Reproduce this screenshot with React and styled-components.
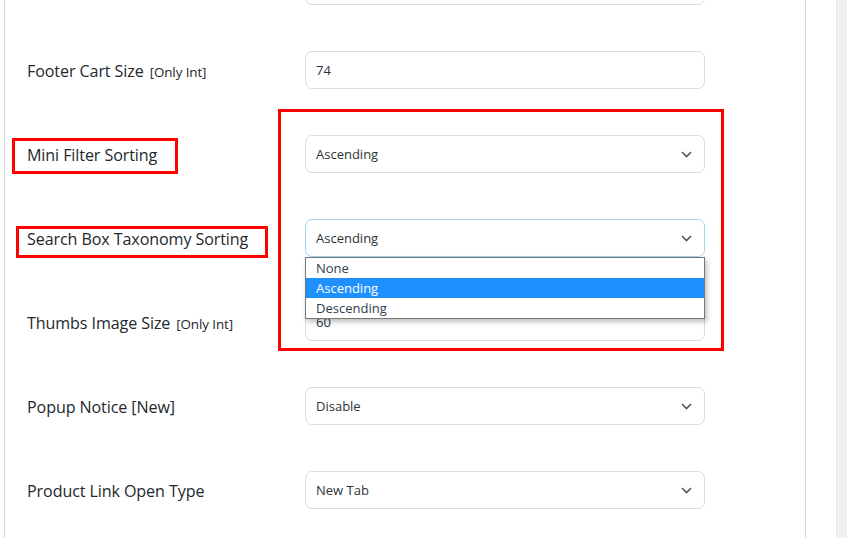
import React from "react";
import styled, { createGlobalStyle } from "styled-components";

const Global = createGlobalStyle`
  html, body { margin: 0; padding: 0; background: #fff; }
  body { font-family: "Open Sans", "Noto Sans", sans-serif; overflow: hidden; }
`;

const Page = styled.div`
  display: flex;
  width: 847px;
  height: 538px;
  overflow: hidden;
  background: #fff;
`;

const Panel = styled.div`
  position: relative;
  margin-left: 4px;
  width: 803px;
  height: 538px;
  box-sizing: border-box;
  border-left: 1px solid #d6d6d6;
  border-right: 1px solid #d6d6d6;
  overflow: hidden;
`;

const Gutter = styled.div`
  width: 30px;
`;

const Track = styled.div`
  width: 10px;
  background: #f0f0f0;
  border-left: 1px solid #e6e6e6;
`;

const Form = styled.div`
  display: flex;
  flex-direction: column;
  margin-top: -56px;
`;

const Row = styled.div`
  position: relative;
  display: grid;
  grid-template-columns: 278px 400px;
  align-items: center;
  padding: 23px 0 23px 22px;
`;

const Label = styled.div`
  font-size: 16.1px;
  color: #23282d;
  letter-spacing: -0.1px;
  display: flex;
  align-items: baseline;
  gap: 6px;
  margin-top: 1px;
`;

const Hint = styled.span`
  font-size: 13.4px;
  color: #23282d;
  letter-spacing: -0.1px;
`;

const Field = styled.div`
  position: relative;
  height: 38px;
  box-sizing: border-box;
  border: 1px solid ${(p) => (p.$focused ? "#a6d3ec" : "#dcdcde")};
  border-radius: 7px;
  background: #fff;
  display: flex;
  align-items: center;
  justify-content: space-between;
  padding: 0 12px 0 10px;
  font-size: 13px;
  color: #2c3338;
`;

const Chevron = () => (
  <svg width="11" height="7" viewBox="0 0 11 7">
    <polyline points="1,1 5.5,5.5 10,1" fill="none" stroke="#555" strokeWidth="1.6" />
  </svg>
);

const Menu = styled.div`
  position: absolute;
  left: -1px;
  top: 37px;
  width: 400px;
  box-sizing: border-box;
  border: 1px solid #767676;
  background: #fff;
  box-shadow: 2px 3px 5px rgba(0, 0, 0, 0.25);
  z-index: 2;
`;

const Option = styled.div`
  height: 20px;
  line-height: 20px;
  padding-left: 10px;
  font-size: 13px;
  color: ${(p) => (p.$active ? "#fff" : "#2c3e50")};
  background: ${(p) => (p.$active ? "#1e90ff" : "#fff")};
`;

const Mark = styled.div`
  position: absolute;
  left: ${(p) => p.$x}px;
  top: ${(p) => p.$y}px;
  width: ${(p) => p.$w}px;
  height: ${(p) => p.$h}px;
  box-sizing: border-box;
  border: 3px solid #ff0000;
  pointer-events: none;
  z-index: 3;
`;

const rows = [
  { label: "", value: "", select: false },
  { label: "Footer Cart Size", hint: "[Only Int]", value: "74" },
  { label: "Mini Filter Sorting", value: "Ascending", select: true },
  { label: "Search Box Taxonomy Sorting", value: "Ascending", select: true, open: true },
  { label: "Thumbs Image Size", hint: "[Only Int]", value: "60" },
  { label: "Popup Notice [New]", value: "Disable", select: true },
  { label: "Product Link Open Type", value: "New Tab", select: true },
];

export default function App() {
  return (
    <>
      <Global />
      <Page>
        <Panel>
          <Form>
            {rows.map((r, i) => (
              <Row key={i}>
                <Label>
                  {r.label}
                  {r.hint && <Hint>{r.hint}</Hint>}
                </Label>
                <Field $focused={r.open}>
                  <span>{r.value}</span>
                  {r.select && <Chevron />}
                  {r.open && (
                    <Menu>
                      <Option>None</Option>
                      <Option $active>Ascending</Option>
                      <Option>Descending</Option>
                    </Menu>
                  )}
                </Field>
              </Row>
            ))}
          </Form>
          <Mark $x={7} $y={138} $w={166} $h={36} />
          <Mark $x={11} $y={226} $w={252} $h={32} />
          <Mark $x={273} $y={109} $w={446} $h={242} />
        </Panel>
        <Gutter />
        <Track />
      </Page>
    </>
  );
}
